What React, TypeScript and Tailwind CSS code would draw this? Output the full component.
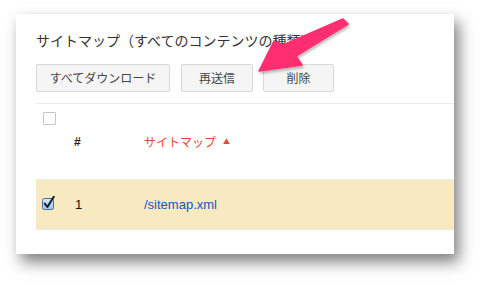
const jp = { fontFamily: '"Noto Sans CJK JP", "Liberation Sans", sans-serif' }

function CheckedBox() {
  return (
    <svg width="15" height="15" viewBox="0 0 15 15">
      <defs>
        <linearGradient id="cb" x1="0" y1="0" x2="0" y2="1">
          <stop offset="0" stopColor="#d8e8f8" />
          <stop offset="1" stopColor="#9cc2ea" />
        </linearGradient>
      </defs>
      <rect x="0.5" y="2.5" width="11" height="11" rx="2" fill="url(#cb)" stroke="#4a6a92" />
      <path d="M2.8 7.6 L5.4 11 L11.8 0.8" fill="none" stroke="#0c1a33" strokeWidth="2" strokeLinecap="round" strokeLinejoin="round" />
    </svg>
  )
}

function Arrow() {
  return (
    <svg className="absolute left-0 top-0 pointer-events-none" width="484" height="286">
      <defs>
        <filter id="sh" x="-20%" y="-20%" width="140%" height="140%">
          <feDropShadow dx="1" dy="2" stdDeviation="1.5" floodColor="#000" floodOpacity="0.3" />
        </filter>
      </defs>
      <polygon
        points="343,19 348,24 296,56 302,65 259,71 274,41 283,45"
        fill="#ff2e70"
        stroke="#ff2e70"
        strokeWidth="1.5"
        strokeLinejoin="round"
        filter="url(#sh)"
      />
    </svg>
  )
}

export default function App() {
  return (
    <div className="relative w-[484px] h-[286px] bg-white overflow-hidden">
      <div className="ml-[16px] mt-[14px] w-[438px] h-[240px] bg-white shadow-[5px_8px_14px_rgba(0,0,0,0.5)] pl-[20px] pt-[16px]" style={jp}>
        <div className="text-[14px] leading-[20px] text-[#333]">サイトマップ（すべてのコンテンツの種類）</div>
        <div className="mt-[14px] flex items-center">
          <button className="w-[134px] h-[28px] bg-[#f5f5f5] border border-[#d8d8d8] rounded-[2px] text-[12px] text-[#444]">すべてダウンロード</button>
          <button className="ml-[11px] w-[72px] h-[28px] bg-[#f5f5f5] border border-[#d8d8d8] rounded-[2px] text-[12px] text-[#444]">再送信</button>
          <button className="ml-[10px] w-[71px] h-[28px] bg-[#f5f5f5] border border-[#d8d8d8] rounded-[2px] text-[12px] text-[#444]">削除</button>
        </div>
        <div className="mt-[11px] border-t border-[#ebebeb]">
          <div className="h-[75px] relative">
            <div className="absolute left-[7px] top-[8px] w-[13px] h-[13px] border border-[#c6c6c6] rounded-[1px] bg-white" />
            <div className="flex items-center pt-[28px] h-[47px]">
              <span className="ml-[38px] w-[70px] text-[12px] font-bold text-[#222]" style={{ fontFamily: '"Liberation Sans", sans-serif' }}>#</span>
              <span className="text-[12px] text-[#dd4b39] flex items-center gap-[7px]">サイトマップ<span className="text-[7px]">▲</span></span>
            </div>
          </div>
          <div className="h-[51px] bg-[#f7e9c0] border-y border-[#ebebeb] flex items-center" style={{ fontFamily: '"Liberation Sans", sans-serif' }}>
            <div className="ml-[6px] w-[15px] -mt-[2px]"><CheckedBox /></div>
            <span className="ml-[18px] w-[69px] text-[13px] text-[#111]">1</span>
            <span className="text-[13px] text-[#1155cc]">/sitemap.xml</span>
          </div>
        </div>
      </div>
      <Arrow />
    </div>
  )
}
